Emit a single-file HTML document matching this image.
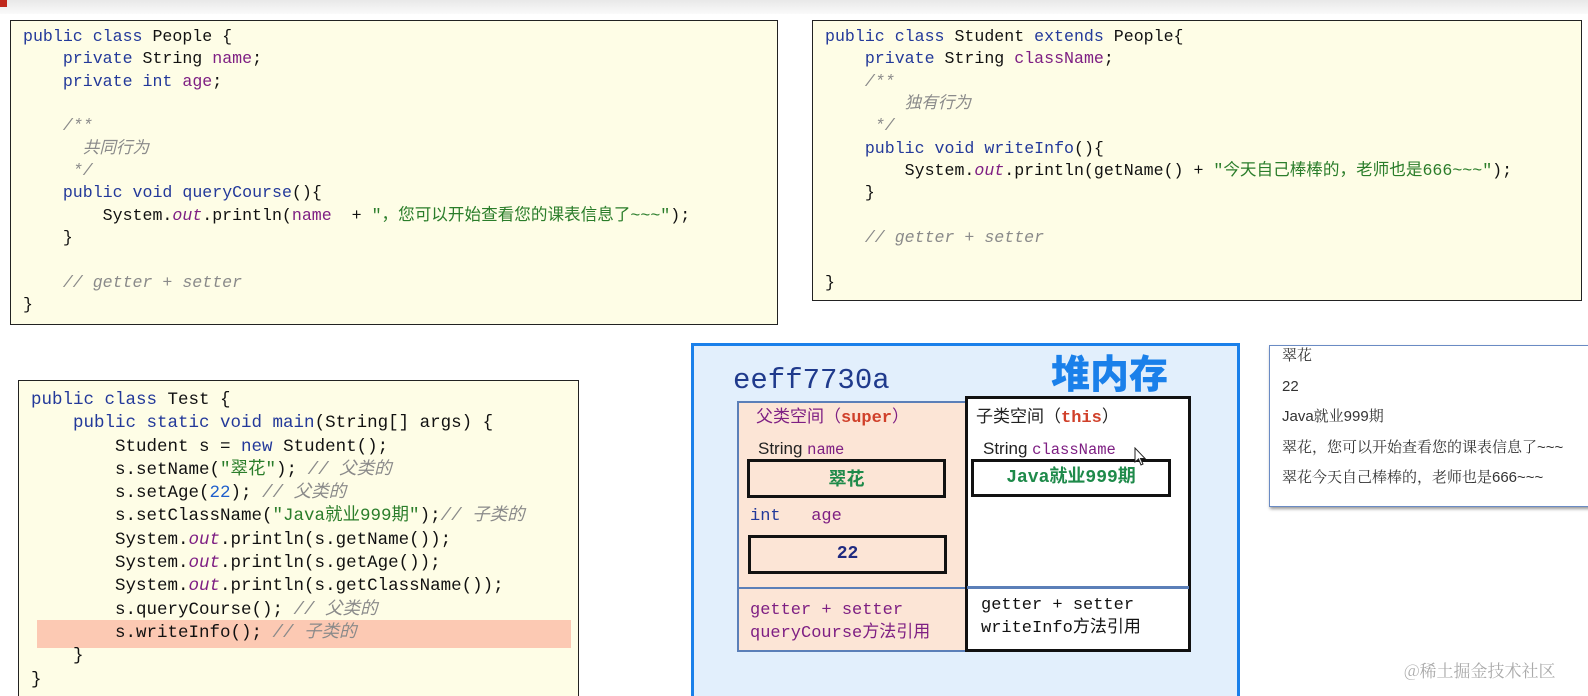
<!DOCTYPE html>
<html style="width:1588px;height:696px;overflow:hidden"><head><meta charset="utf-8"><style>
*{margin:0;padding:0;box-sizing:border-box}
body{width:1588px;height:696px;background:#fff;position:relative;overflow:hidden;font-family:"Liberation Sans","Noto Sans CJK SC",sans-serif}
.top{position:absolute;left:0;top:0;width:1588px;height:14px;background:linear-gradient(#e8e8e8,#fafafa)}
.red{position:absolute;left:0;top:0;width:7px;height:7px;background:#c0281c}
.box{position:absolute;background:#fefde6;border:1px solid #222}
pre{font-family:"Liberation Mono","Noto Sans CJK SC",monospace;color:#111;position:absolute;white-space:pre}
.k{color:#23399a}.f{color:#7e1f83}.c{color:#8a8a8a;font-style:italic}.s{color:#2a7d2a}.o{color:#7e1f83;font-style:italic}.n{color:#1f5fcc}
.abs{position:absolute;white-space:nowrap}
</style></head><body>
<div class="top"></div><div class="red"></div>

<div class="box" style="left:10px;top:20px;width:768px;height:305px"></div>
<pre style="left:23px;top:26px;font-size:16.6px;line-height:22.35px"><span class="k">public class</span> People {
    <span class="k">private</span> String <span class="f">name</span>;
    <span class="k">private int</span> <span class="f">age</span>;

    <span class="c">/**</span>
      <span class="c">共同行为</span>
     <span class="c">*/</span>
    <span class="k">public void</span> <span class="k">queryCourse</span>(){
        System.<span class="o">out</span>.println(<span class="f">name</span>  + <span class="s">"，您可以开始查看您的课表信息了~~~"</span>);
    }

    <span class="c">// getter + setter</span>
}</pre>

<div class="box" style="left:812px;top:20px;width:770px;height:281px"></div>
<pre style="left:825px;top:26px;font-size:16.6px;line-height:22.35px"><span class="k">public class</span> Student <span class="k">extends</span> People{
    <span class="k">private</span> String <span class="f">className</span>;
    <span class="c">/**</span>
        <span class="c">独有行为</span>
     <span class="c">*/</span>
    <span class="k">public void</span> <span class="k">writeInfo</span>(){
        System.<span class="o">out</span>.println(getName() + <span class="s">"今天自己棒棒的，老师也是666~~~"</span>);
    }

    <span class="c">// getter + setter</span>

}</pre>

<div class="box" style="left:18px;top:380px;width:561px;height:330px"></div>
<div class="abs" style="left:37px;top:620px;width:534px;height:28px;background:#fcc9b3"></div>
<pre style="left:31px;top:389px;font-size:17.5px;line-height:23.3px"><span class="k">public class</span> Test {
    <span class="k">public static void main</span>(String[] args) {
        Student s = <span class="k">new</span> Student();
        s.setName(<span class="s">"翠花"</span>); <span class="c">// 父类的</span>
        s.setAge(<span class="n">22</span>); <span class="c">// 父类的</span>
        s.setClassName(<span class="s">"Java就业999期"</span>);<span class="c">// 子类的</span>
        System.<span class="o">out</span>.println(s.getName());
        System.<span class="o">out</span>.println(s.getAge());
        System.<span class="o">out</span>.println(s.getClassName());
        s.queryCourse(); <span class="c">// 父类的</span>
        s.writeInfo(); <span class="c">// 子类的</span>
    }
}</pre>

<!-- heap -->
<div class="abs" style="left:691px;top:343px;width:549px;height:360px;background:#e2effc;border:3px solid #1a80ea"></div>
<div class="abs" style="left:733px;top:364px;font-family:'Liberation Mono',monospace;font-size:29px;color:#1f3a8c">eeff7730a</div>
<div class="abs" style="left:1051px;top:344px;font-family:'Noto Sans CJK SC',sans-serif;font-weight:900;font-size:39px;color:#1a80ea">堆内存</div>
<div class="abs" style="left:737px;top:401px;width:230px;height:251px;background:#fce5d6;border:2px solid #5b7fb8"></div>
<div class="abs" style="left:737px;top:587px;width:230px;height:2px;background:#5b7fb8"></div>
<div class="abs" style="left:965px;top:396px;width:226px;height:256px;background:#fff;border:3px solid #111"></div>
<div class="abs" style="left:967px;top:586px;width:222px;height:3px;background:#5b7fb8"></div>
<div class="abs" style="left:756px;top:402px;font-size:17px;color:#7e1f83;font-family:'Noto Sans CJK SC',sans-serif">父类空间（<b style="color:#d0402a;font-family:'Liberation Mono',monospace">super</b>）</div>
<div class="abs" style="left:976px;top:402px;font-size:17px;color:#222;font-family:'Noto Sans CJK SC',sans-serif">子类空间（<b style="color:#d0402a;font-family:'Liberation Mono',monospace">this</b>）</div>
<div class="abs" style="left:758px;top:439px;font-size:17px;color:#222">String <span style="color:#7e1f83;font-family:'Liberation Mono',monospace;font-size:15.5px">name</span></div>
<div class="abs" style="left:983px;top:439px;font-size:17px;color:#222">String <span style="color:#7e1f83;font-family:'Liberation Mono',monospace;font-size:15.5px">className</span></div>
<div class="abs" style="left:747px;top:459px;width:199px;height:39px;border:3px solid #111;text-align:center;line-height:33px;color:#1e8a4a;font-weight:bold;font-size:18px;font-family:'Noto Sans CJK SC',sans-serif">翠花</div>
<div class="abs" style="left:971px;top:459px;width:200px;height:38px;border:3px solid #111;text-align:center;line-height:32px;color:#1e8a4a;font-weight:bold;font-size:18px;font-family:'Liberation Mono','Noto Sans CJK SC',monospace">Java就业999期</div>
<div class="abs" style="left:750px;top:507px;font-family:'Liberation Mono',monospace;font-size:17px;color:#23399a;white-space:pre">int   <span style="color:#7e1f83">age</span></div>
<div class="abs" style="left:748px;top:535px;width:199px;height:39px;border:3px solid #111;text-align:center;line-height:33px;color:#1f2a80;font-weight:bold;font-size:18px;font-family:'Liberation Mono',monospace">22</div>
<div class="abs" style="left:750px;top:599px;font-family:'Liberation Mono','Noto Sans CJK SC',monospace;font-size:17px;line-height:23px;color:#7e1f83">getter + setter<br>queryCourse方法引用</div>
<div class="abs" style="left:981px;top:594px;font-family:'Liberation Mono','Noto Sans CJK SC',monospace;font-size:17px;line-height:23px;color:#111">getter + setter<br>writeInfo方法引用</div>
<svg class="abs" style="left:1134px;top:447px" width="14" height="20" viewBox="0 0 14 20"><path d="M1 1 L1 15 L4.5 12 L7 18 L9 17 L6.5 11.5 L11 11.5 Z" fill="#fff" stroke="#222" stroke-width="1"/></svg>

<!-- console -->
<div class="abs" style="left:1269px;top:345px;width:330px;height:162px;background:#fff;border:1px solid #6a8bc4;box-shadow:1px 2px 3px rgba(0,0,0,.4)"></div>
<div class="abs" style="left:1282px;top:341px;font-size:15px;line-height:30.5px;color:#333;font-family:'Liberation Sans','Noto Serif CJK SC',sans-serif">翠花<br>22<br>Java就业999期<br>翠花，您可以开始查看您的课表信息了~~~<br>翠花今天自己棒棒的，老师也是666~~~</div>
<div class="abs" style="left:1404px;top:657px;font-size:17px;color:#aaa;font-family:'Noto Serif CJK SC',serif">@稀土掘金技术社区</div>
</body></html>
